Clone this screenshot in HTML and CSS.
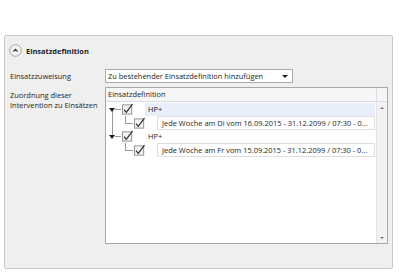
FILE: index.html
```html
<!DOCTYPE html>
<html lang="de">
<head>
    <meta charset="UTF-8">
    <title>Einsatzdefinition</title>
    <link rel="stylesheet" href="styles.css">
</head>
<body>
<div class="panel">
    <div class="panel-head">
        <span class="collapse-btn">
            <svg width="13" height="13" viewBox="0 0 13 13">
                <circle cx="6.5" cy="6.5" r="5.8" fill="#f4f4f4" stroke="#9a9a9a" stroke-width="0.9"/>
                <path d="M4.3 7.6 L6.5 5.4 L8.7 7.6" fill="none" stroke="#333" stroke-width="1.1"/>
            </svg>
        </span>
        <span class="panel-title">Einsatzdefinition</span>
    </div>

    <div class="form">
        <div class="label label-mid">Einsatzzuweisung</div>
        <div class="combo">
            <span class="combo-text">Zu bestehender Einsatzdefinition hinzufügen</span>
            <span class="combo-arrow"></span>
        </div>

        <div class="label label-top">Zuordnung dieser<br>Intervention zu Einsätzen</div>
        <div class="tree">
            <div class="tree-head">
                <span class="head-col">Einsatzdefinition</span>
                <span class="head-rest"></span>
            </div>
            <div class="tree-main">
                <div class="tree-body">
                    <div class="row parent">
                        <span class="exp line-down"><i class="tri"></i></span>
                        <span class="chk"></span>
                        <span class="cell selected">HP+</span>
                    </div>
                    <div class="row child">
                        <span class="guide line-through"></span>
                        <span class="elbow"></span>
                        <span class="chk"></span>
                        <span class="cell boxed">Jede Woche am Di vom 16.09.2015 - 31.12.2099 / 07:30 - 0...</span>
                    </div>
                    <div class="row parent">
                        <span class="exp line-up"><i class="tri"></i></span>
                        <span class="chk"></span>
                        <span class="cell">HP+</span>
                    </div>
                    <div class="row child">
                        <span class="guide"></span>
                        <span class="elbow"></span>
                        <span class="chk"></span>
                        <span class="cell boxed">Jede Woche am Fr vom 15.09.2015 - 31.12.2099 / 07:30 - 0...</span>
                    </div>
                </div>
                <div class="vscroll">
                    <span class="arrow-up"></span>
                    <span class="arrow-down"></span>
                </div>
            </div>
        </div>
    </div>
</div>
<script>
    // check mark for every checkbox
    document.querySelectorAll('.chk').forEach(function(el) {
        el.innerHTML = '<svg width="13" height="13" viewBox="0 0 13 13">' +
            '<rect x="0.5" y="1.5" width="10" height="10" fill="#f2f2f2" stroke="#8d8d8d"/>' +
            '<path d="M2.2 6.6 L4.6 9.6 L11.4 0.6" fill="none" stroke="#262626" stroke-width="1.2"/></svg>';
    });
</script>
</body>
</html>
```

FILE: styles.css
```css
body {
    margin: 0;
    background: #ffffff;
    font-family: "Open Sans", sans-serif;
    font-size: 7.45px;
    color: #1e1e1e;
}
.panel {
    margin: 35px 0 0 4px;
    width: 387px;
    height: 232px;
    border: 1px solid #c8c8c8;
    border-radius: 2px;
    background: #efefef;
}
.panel-head {
    display: flex;
    align-items: center;
    padding: 8px 0 0 4px;
    height: 13px;
}
.collapse-btn {
    display: flex;
    width: 13px;
    height: 13px;
}
.panel-title {
    margin-left: 4px;
    font-weight: bold;
}
.form {
    display: grid;
    grid-template-columns: 95px auto;
    row-gap: 4px;
    margin-top: 12px;
    padding-left: 5px;
    justify-items: start;
}
.label {
    line-height: 10px;
}
.label-mid {
    align-self: center;
}
.label-top {
    padding-top: 3px;
}
.combo {
    display: flex;
    align-items: center;
    box-sizing: border-box;
    width: 188px;
    height: 14px;
    padding: 0 4px 0 2px;
    border: 1px solid #acacac;
    background: #fff;
}
.combo-text {
    flex: 1;
    white-space: nowrap;
}
.combo-arrow {
    border-left: 3px solid transparent;
    border-right: 3px solid transparent;
    border-top: 3px solid #222;
}
.tree {
    box-sizing: border-box;
    width: 283px;
    height: 157px;
    border: 1px solid #a8a8a8;
    background: #fff;
    display: flex;
    flex-direction: column;
}
.tree-head {
    display: flex;
    height: 13px;
    border-bottom: 1px solid #d6dbe4;
    background: #f6f6f6;
}
.head-col {
    width: 268px;
    padding-left: 2px;
    line-height: 13px;
    border-right: 1px solid #dcdcdc;
}
.head-rest {
    flex: 1;
}
.tree-main {
    flex: 1;
    display: flex;
}
.tree-body {
    width: 270px;
    padding-top: 1px;
}
.vscroll {
    flex: 1;
    display: flex;
    flex-direction: column;
    justify-content: space-between;
    align-items: center;
    padding: 5px 0 4px;
    background: #f2f2f2;
    border-left: 1px solid #e6e6e6;
}
.arrow-up {
    border-left: 2px solid transparent;
    border-right: 2px solid transparent;
    border-bottom: 2px solid #777;
}
.arrow-down {
    border-left: 2px solid transparent;
    border-right: 2px solid transparent;
    border-top: 2px solid #777;
}
.row {
    display: flex;
    align-items: center;
}
.row.parent {
    height: 13px;
}
.row.child {
    height: 14px;
}
.exp {
    display: flex;
    align-items: center;
    width: 16px;
    height: 100%;
    padding-left: 3px;
    box-sizing: border-box;
    background: linear-gradient(#9a9a9a, #9a9a9a) no-repeat 9px 50% / 6px 1px;
}
.exp.line-down {
    background:
        linear-gradient(#9a9a9a, #9a9a9a) no-repeat 9px 50% / 6px 1px,
        linear-gradient(#9a9a9a, #9a9a9a) no-repeat 6px 100% / 1px 50%;
}
.exp.line-up {
    background:
        linear-gradient(#9a9a9a, #9a9a9a) no-repeat 9px 50% / 6px 1px,
        linear-gradient(#9a9a9a, #9a9a9a) no-repeat 6px 0 / 1px 50%;
}
.tri {
    border-left: 3px solid transparent;
    border-right: 3px solid transparent;
    border-top: 4px solid #1a1a1a;
}
.guide {
    width: 16px;
    height: 100%;
}
.guide.line-through {
    background: linear-gradient(#9a9a9a, #9a9a9a) no-repeat 6px 0 / 1px 100%;
}
.elbow {
    width: 12px;
    height: 100%;
    background:
        linear-gradient(#9a9a9a, #9a9a9a) no-repeat 3px 0 / 1px 50%,
        linear-gradient(#9a9a9a, #9a9a9a) no-repeat 3px 50% / 8px 1px;
}
.chk {
    display: flex;
    width: 12px;
    height: 13px;
}
.cell {
    flex: 1;
    height: 100%;
    margin-left: 11px;
    margin-right: 1px;
    padding-left: 3px;
    line-height: 13px;
    white-space: nowrap;
    overflow: hidden;
}
.cell.selected {
    background: #e8eefa;
}
.cell.boxed {
    box-sizing: border-box;
    border: 1px solid #dedede;
    line-height: 12px;
    padding-left: 4px;
}
```
